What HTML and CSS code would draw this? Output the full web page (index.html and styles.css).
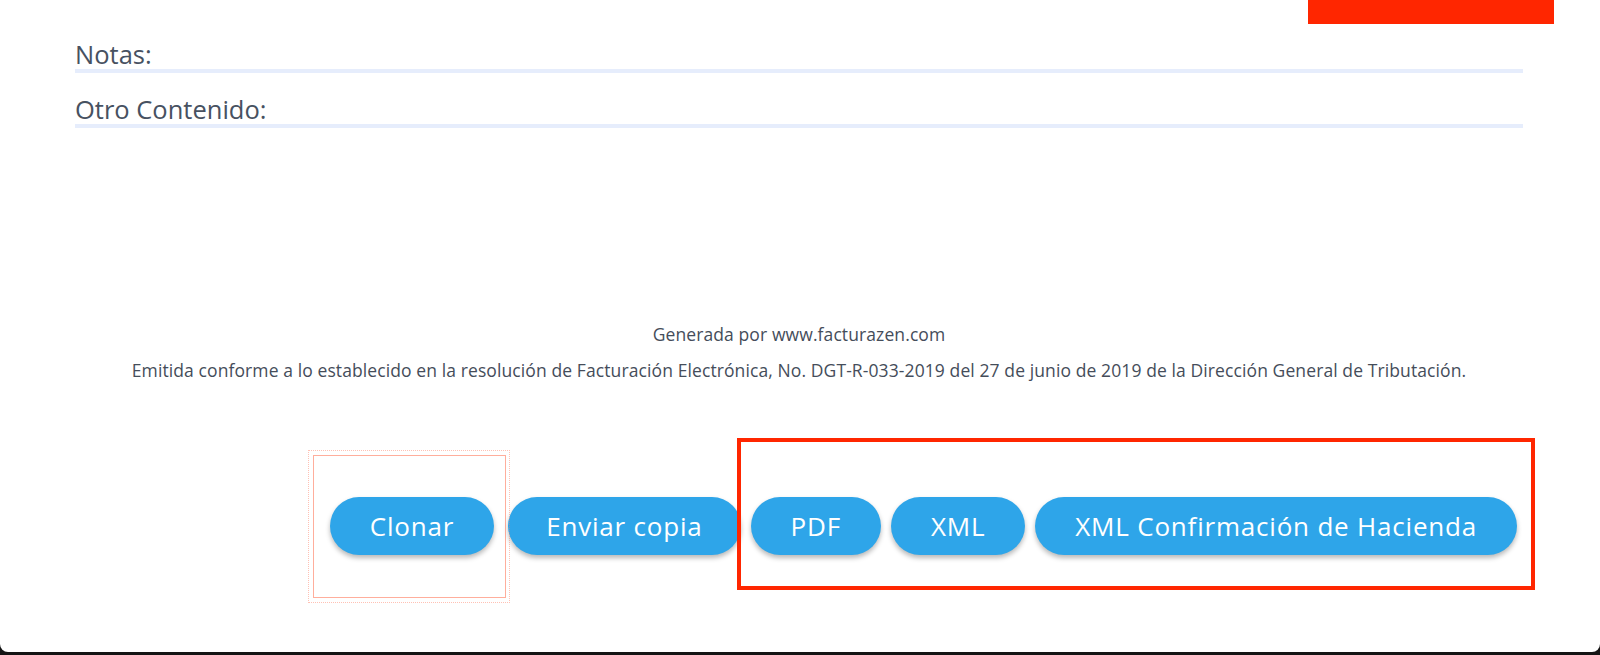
FILE: index.html
```html
<!DOCTYPE html>
<html lang="es">
<head>
  <meta charset="UTF-8" />
  <meta name="viewport" content="width=device-width, initial-scale=1.0" />
  <title>Factura</title>
  <link rel="stylesheet" href="styles.css">
</head>
<body>
  <div class="sheet">
    <div class="mark-top"></div>

    <div class="fields">
      <div class="field">Notas:</div>
      <div class="field">Otro Contenido:</div>
    </div>

    <div class="legal">
      <p>Generada por www.facturazen.com</p>
      <p>Emitida conforme a lo establecido en la resolución de Facturación Electrónica, No. DGT-R-033-2019 del 27 de junio de 2019 de la Dirección General de Tributación.</p>
    </div>

    <div class="actions">
      <button class="pill">Clonar</button>
      <button class="pill wide-gap">Enviar copia</button>
      <button class="pill">PDF</button>
      <button class="pill">XML</button>
      <button class="pill">XML Confirmación de Hacienda</button>
    </div>

    <div class="mark-soft"></div>
    <div class="mark-soft inner"></div>
    <div class="mark-red"></div>
  </div>
</body>
</html>
```

FILE: styles.css
```css
body {
  margin: 0;
  background-color: #141414;
  font-family: "Open Sans", "Noto Sans", sans-serif;
  color: #4a5463;
}

.sheet {
  position: relative;
  height: 652px;
  background-color: #ffffff;
  border-radius: 0 0 8px 8px;
  overflow: hidden;
  padding: 39px 77px 0 75px;
  box-sizing: border-box;
}

.fields {
  display: flex;
  flex-direction: column;
  gap: 21px;
}

.field {
  font-size: 25.5px;
  line-height: 30px;
  color: #475161;
  border-bottom: 4px solid #e6edfc;
}

.legal {
  margin-top: 196px;
  text-align: center;
  font-size: 17.5px;
  line-height: 20px;
  letter-spacing: 0.1px;
  color: #454d5a;
}

.legal p {
  margin: 0 0 16px;
}

.actions {
  margin-top: 117px;
  display: flex;
  justify-content: flex-end;
  gap: 10px;
  padding-right: 6px;
}

.pill {
  font-family: "Open Sans", "Noto Sans", sans-serif;
  font-size: 26px;
  line-height: 30px;
  letter-spacing: 0.8px;
  padding: 14px 40px;
  border: none;
  border-radius: 30px;
  background-color: #2ea5e9;
  color: #ffffff;
  box-shadow: 0 3px 5px rgba(0, 0, 0, 0.28);
  cursor: pointer;
}

.pill.wide-gap {
  padding: 14px 38px;
  margin-left: 4px;
}

.mark-top {
  position: absolute;
  top: 0;
  left: 1308px;
  width: 246px;
  height: 24px;
  background-color: #ff2600;
}

.mark-red {
  position: absolute;
  left: 737px;
  top: 438px;
  width: 790px;
  height: 144px;
  border: 4px solid #ff2600;
}

.mark-soft {
  position: absolute;
  left: 308px;
  top: 450px;
  width: 200px;
  height: 151px;
  border: 1px dotted rgba(255, 120, 90, 0.45);
}

.mark-soft.inner {
  left: 313px;
  top: 455px;
  width: 191px;
  height: 141px;
  border: 1px solid rgba(255, 120, 90, 0.6);
}
```
